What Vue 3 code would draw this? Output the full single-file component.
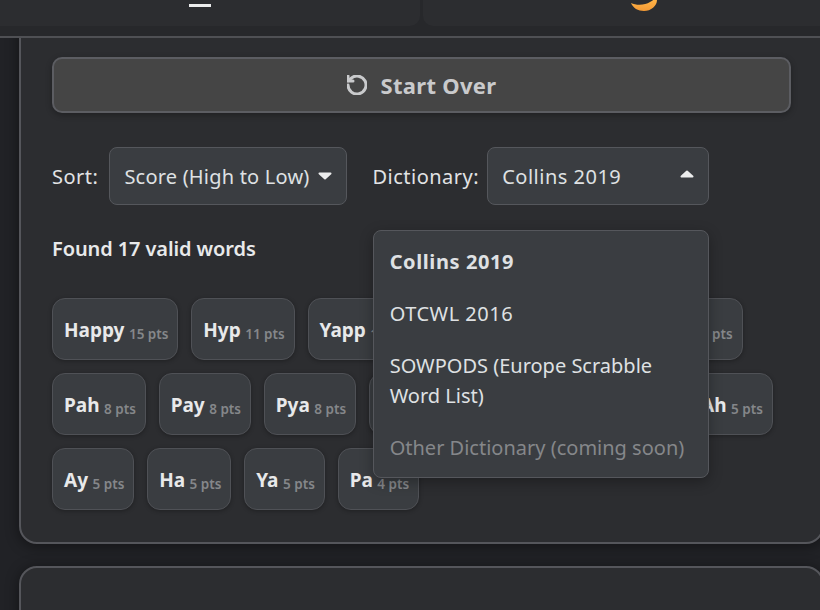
<script setup>
const words = [
  { word: 'Happy', pts: 15 }, { word: 'Hyp', pts: 11 }, { word: 'Yapp', pts: 11 },
  { word: 'Hay', pts: 9 }, { word: 'Yah', pts: 9 }, { word: 'Hap', pts: 8 },
  { word: 'Pah', pts: 8 }, { word: 'Pay', pts: 8 }, { word: 'Pya', pts: 8 },
  { word: 'Yap', pts: 8 }, { word: 'App', pts: 7 }, { word: 'Pap', pts: 7 },
  { word: 'Ah', pts: 5 }, { word: 'Ay', pts: 5 }, { word: 'Ha', pts: 5 },
  { word: 'Ya', pts: 5 }, { word: 'Pa', pts: 4 }
]

const dictionaries = [
  { label: 'Collins 2019', selected: true },
  { label: 'OTCWL 2016', wide: true },
  { label: 'SOWPODS (Europe Scrabble Word List)' },
  { label: 'Other Dictionary (coming soon)', disabled: true }
]
</script>

<template>
  <div class="page">
    <header class="topbar">
      <div class="tabs">
        <div class="tab tab-menu">
          <svg width="24" height="20" viewBox="0 0 24 20"><rect x="1" y="16" width="22" height="3" fill="#eceded" /></svg>
        </div>
        <div class="tab tab-theme">
          <svg width="26" height="11" viewBox="0 0 26 11">
            <defs>
              <linearGradient id="moon" x1="0" y1="0" x2="0" y2="1">
                <stop offset="0" stop-color="#ffb347" />
                <stop offset="1" stop-color="#f39a35" />
              </linearGradient>
            </defs>
            <path d="M0 3C5 5.5 14 5.5 19 2 21 1 22 0 22 0L26 0C26 6 20 11 13 11 7 11 2 8 0 3Z" fill="url(#moon)" />
          </svg>
        </div>
      </div>
    </header>

    <main class="content">
      <section class="card card-results">
        <button class="reset">
          <svg width="20" height="20" viewBox="2 2 20 20" fill="none" stroke="currentColor" stroke-width="3" stroke-linecap="round" stroke-linejoin="round">
            <path d="M3 12a9 9 0 1 0 3-6.7L3 8" />
            <path d="M3 3v5h5" />
          </svg>
          <span>Start Over</span>
        </button>

        <div class="controls">
          <label class="label label-sort">Sort:</label>
          <div class="select select-sort">
            <span>Score (High to Low)</span>
            <svg class="caret" width="14" height="8" viewBox="0 0 14 8"><path d="M1.5 1.5h11L7 6.5z" fill="#eceded" stroke="#eceded" stroke-width="2" stroke-linejoin="round" /></svg>
          </div>
          <label class="label label-dict">Dictionary:</label>
          <div class="select select-dict">
            <span class="digits">Collins 2019</span>
            <svg class="caret caret-up" width="14" height="8" viewBox="0 0 14 8"><path d="M1.5 6.5h11L7 1.5z" fill="#eceded" stroke="#eceded" stroke-width="2" stroke-linejoin="round" /></svg>
            <ul class="menu">
              <li
                v-for="d in dictionaries"
                :key="d.label"
                :class="{ selected: d.selected, wide: d.wide, disabled: d.disabled }"
              >{{ d.label }}</li>
            </ul>
          </div>
        </div>

        <p class="found">Found 17 valid words</p>

        <div class="chips">
          <div v-for="w in words" :key="w.word" class="chip">
            <b>{{ w.word }}</b> <small>{{ w.pts }} pts</small>
          </div>
        </div>
      </section>

      <section class="card card-next"></section>
    </main>
  </div>
</template>

<style>
html, body {
  margin: 0;
  background: #212226;
}
</style>

<style scoped>
.page {
  width: 820px;
  height: 610px;
  overflow: hidden;
  display: flex;
  flex-direction: column;
  background: #212226;
  font-family: "Noto Sans", sans-serif;
  color: #e4e5e7;
}

.topbar {
  flex: none;
  height: 36px;
  background: #27282b;
  border-bottom: 2px solid #4f5054;
  box-sizing: content-box;
  position: relative;
  z-index: 2;
  overflow: hidden;
}

.tabs {
  display: flex;
  gap: 3px;
  margin: 0 -44px 0 -21px;
  height: 26px;
}

.tab {
  flex: 1;
  background: #2c2d30;
  border-radius: 0 0 10px 10px;
  display: flex;
  justify-content: center;
  align-items: flex-end;
}

.tab-menu {
  padding-bottom: 18px;
}

.tab-theme {
  padding-bottom: 15px;
}

.content {
  flex: 1;
  min-height: 0;
  padding-left: 19px;
  display: flex;
  flex-direction: column;
  gap: 22px;
}

.card {
  flex: none;
  width: 805px;
  box-sizing: border-box;
  background: #2c2d30;
  border: 2px solid #55565b;
  border-radius: 18px;
  box-shadow: 0 2px 14px rgba(0, 0, 0, 0.45);
}

.card-results {
  margin-top: -30px;
  height: 536px;
  padding: 47px 31px 0;
}

.card-next {
  height: 120px;
}

.reset {
  width: 100%;
  height: 56px;
  display: flex;
  align-items: center;
  justify-content: center;
  gap: 14px;
  background: #454545;
  border: 2px solid #5c5d62;
  border-radius: 10px;
  color: #c9cacc;
  font: 700 22px "Noto Sans", sans-serif;
  letter-spacing: 0.3px;
  box-shadow: 0 2px 6px rgba(0, 0, 0, 0.3);
}

.controls {
  display: flex;
  align-items: center;
  margin-top: 34px;
  font-size: 20px;
}

.label {
  margin-right: 8px;
  letter-spacing: 0.5px;
  color: #e2e3e5;
}

.label-sort {
  margin-right: 11px;
}

.label-dict {
  margin-left: 25px;
}

.select {
  position: relative;
  height: 58px;
  box-sizing: border-box;
  display: flex;
  align-items: center;
  justify-content: space-between;
  padding: 0 14px;
  background: #3a3d41;
  border: 1.5px solid #55575c;
  border-radius: 8px;
  color: #dfe1e3;
}

.select-sort {
  width: 238px;
  letter-spacing: 0.2px;
}

.select-dict {
  width: 222px;
}

.digits {
  letter-spacing: 0.5px;
}

.caret {
  flex: none;
}

.caret-up {
  margin-top: -5px;
}

.menu {
  position: absolute;
  z-index: 3;
  top: calc(100% + 26px);
  right: -0.5px;
  width: 336px;
  box-sizing: border-box;
  margin: 0;
  padding: 5px 0 3px;
  list-style: none;
  background: #3a3d41;
  border: 1.5px solid #55575c;
  border-radius: 8px;
  box-shadow: 0 4px 14px rgba(0, 0, 0, 0.3);
}

.menu li {
  padding: 11px 16px;
  line-height: 30px;
}

.menu .selected {
  font-weight: 700;
  letter-spacing: 0.6px;
}

.menu .wide {
  letter-spacing: 0.5px;
}

.menu .disabled {
  color: #85878a;
}

.found {
  margin: 30px 0 0;
  font-size: 20px;
  font-weight: 600;
  letter-spacing: -0.1px;
  line-height: 28px;
  color: #e8e9ea;
}

.chips {
  display: flex;
  flex-wrap: wrap;
  gap: 13px 12.8px;
  margin-top: 35px;
}

.chip {
  height: 62px;
  box-sizing: border-box;
  display: flex;
  align-items: center;
  gap: 4.5px;
  padding: 0 9px 0 11px;
  background: #3a3d41;
  border: 1.5px solid #4f5156;
  border-radius: 13px;
  box-shadow: 0 1px 4px rgba(0, 0, 0, 0.3);
}

.chip b {
  margin-top: 2px;
  font-size: 19px;
  color: #e8e9ea;
}

.chip small {
  margin-top: 10px;
  font-size: 13.5px;
  font-weight: 600;
  color: #85878a;
}
</style>
